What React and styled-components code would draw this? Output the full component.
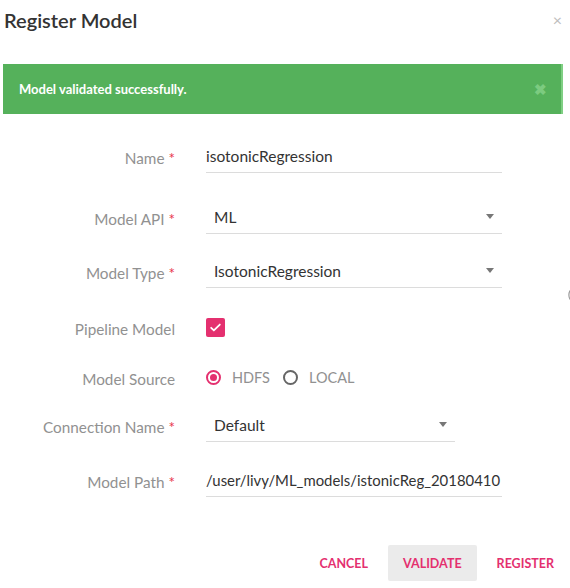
import React from "react";
import styled, { createGlobalStyle } from "styled-components";

const pink = "#e4306f";

const GlobalStyle = createGlobalStyle`
  html, body {
    margin: 0;
    padding: 0;
    background: #fff;
    font-family: "Lato", "Liberation Sans", sans-serif;
  }
`;

const Dialog = styled.div`
  width: 570px;
  height: 588px;
  position: relative;
  overflow: hidden;
  display: flex;
  flex-direction: column;
`;

const Header = styled.div`
  height: 40px;
  display: flex;
  align-items: center;
  justify-content: space-between;
  padding: 0 8px 0 4px;
`;

const Title = styled.h2`
  margin: 0;
  font-size: 20px;
  font-weight: 600;
  color: #333;
`;

const Close = styled.span`
  font-size: 16px;
  color: #bdbdbd;
  line-height: 1;
`;

const Alert = styled.div`
  margin: 24px 7px 0 3px;
  height: 50px;
  background: #55b15b;
  border-right: 2px solid #7fcf83;
  display: flex;
  align-items: center;
  justify-content: space-between;
  padding: 0 14px 0 16px;
  color: #fff;
  font-size: 13px;
  font-weight: 700;
`;

const AlertClose = styled.span`
  color: #7ccb80;
  font-size: 15px;
  font-weight: 700;
`;

const Form = styled.div`
  display: flex;
  flex-direction: column;
`;

const Row = styled.div`
  display: grid;
  grid-template-columns: 175px 1fr;
  column-gap: 31px;
  align-items: center;
  height: 34px;
  margin-top: ${(p) => p.$top}px;
`;

const Label = styled.label`
  text-align: right;
  color: #919191;
  font-size: 15.3px;
  padding-top: 3px;
`;

const Star = styled.span`
  color: #e8334a;
  margin-left: 4px;
`;

const Field = styled.div`
  box-sizing: border-box;
  width: ${(p) => p.$width}px;
  height: 34px;
  border-bottom: 1px solid #dcdcdc;
  display: flex;
  align-items: center;
  justify-content: space-between;
  padding-left: ${(p) => (p.$select ? 8 : 0)}px;
  padding-right: ${(p) => (p.$select ? 8 : 0)}px;
  font-size: ${(p) => p.$size || 15.5}px;
  color: #333;
  white-space: nowrap;
  overflow: hidden;
`;

const Caret = styled.span`
  width: 0;
  height: 0;
  border-left: 4px solid transparent;
  border-right: 4px solid transparent;
  border-top: 5px solid #777;
`;

const Check = styled.span`
  width: 19px;
  height: 19px;
  border-radius: 2px;
  background: ${pink};
  display: flex;
  align-items: center;
  justify-content: center;
`;

const Radios = styled.div`
  display: flex;
  align-items: center;
  gap: 11px;
  font-size: 14.5px;
  color: #919191;
`;

const Radio = styled.span`
  box-sizing: border-box;
  width: 15px;
  height: 15px;
  border-radius: 50%;
  border: 2px solid ${(p) => (p.$on ? pink : "#666")};
  display: flex;
  align-items: center;
  justify-content: center;
  margin-left: ${(p) => (p.$first ? 0 : 2)}px;
  &::after {
    content: "";
    width: 7px;
    height: 7px;
    border-radius: 50%;
    background: ${(p) => (p.$on ? pink : "transparent")};
  }
`;

const Footer = styled.div`
  margin-top: 48px;
  display: flex;
  justify-content: flex-end;
  gap: 5px;
  padding-right: 1px;
`;

const Button = styled.button`
  height: 36px;
  padding: 0 15px;
  border: none;
  border-radius: 2px;
  background: ${(p) => (p.$active ? "#ebebeb" : "transparent")};
  color: ${pink};
  font-family: inherit;
  font-size: 12.5px;
  font-weight: 700;
  text-transform: uppercase;
`;

const Edge = styled.svg`
  position: absolute;
  right: 0;
  top: 289px;
`;

const Select = ({ value, width = 296 }) => (
  <Field $select $width={width}>
    {value}
    <Caret />
  </Field>
);

export default function App() {
  return (
    <>
      <GlobalStyle />
      <Dialog>
        <Header>
          <Title>Register Model</Title>
          <Close>×</Close>
        </Header>
        <Alert>
          Model validated successfully.
          <AlertClose>✖</AlertClose>
        </Alert>
        <Form>
          <Row $top={25}>
            <Label>
              Name<Star>*</Star>
            </Label>
            <Field $width={296}>isotonicRegression</Field>
          </Row>
          <Row $top={27}>
            <Label>
              Model API<Star>*</Star>
            </Label>
            <Select value="ML" />
          </Row>
          <Row $top={20}>
            <Label>
              Model Type<Star>*</Star>
            </Label>
            <Select value="IsotonicRegression" />
          </Row>
          <Row $top={22}>
            <Label>Pipeline Model</Label>
            <Check>
              <svg width="13" height="13" viewBox="0 0 24 24" fill="none">
                <path
                  d="M4 12.5l5 5L20 6.5"
                  stroke="#fff"
                  strokeWidth="3.2"
                  strokeLinecap="round"
                  strokeLinejoin="round"
                />
              </svg>
            </Check>
          </Row>
          <Row $top={16}>
            <Label>Model Source</Label>
            <Radios>
              <Radio $on $first />
              HDFS
              <Radio />
              LOCAL
            </Radios>
          </Row>
          <Row $top={14}>
            <Label>
              Connection Name<Star>*</Star>
            </Label>
            <Select value="Default" width={249} />
          </Row>
          <Row $top={21}>
            <Label>
              Model Path<Star>*</Star>
            </Label>
            <Field $width={296} $size={14.9}>
              /user/livy/ML_models/istonicReg_20180410
            </Field>
          </Row>
        </Form>
        <Footer>
          <Button>Cancel</Button>
          <Button $active>Validate</Button>
          <Button>Register</Button>
        </Footer>
        <Edge width="3" height="12" viewBox="0 0 3 12">
          <path d="M3 1.5 Q0.8 6 3 10.5" stroke="#9a9a9a" strokeWidth="1.2" fill="none" />
        </Edge>
      </Dialog>
    </>
  );
}
